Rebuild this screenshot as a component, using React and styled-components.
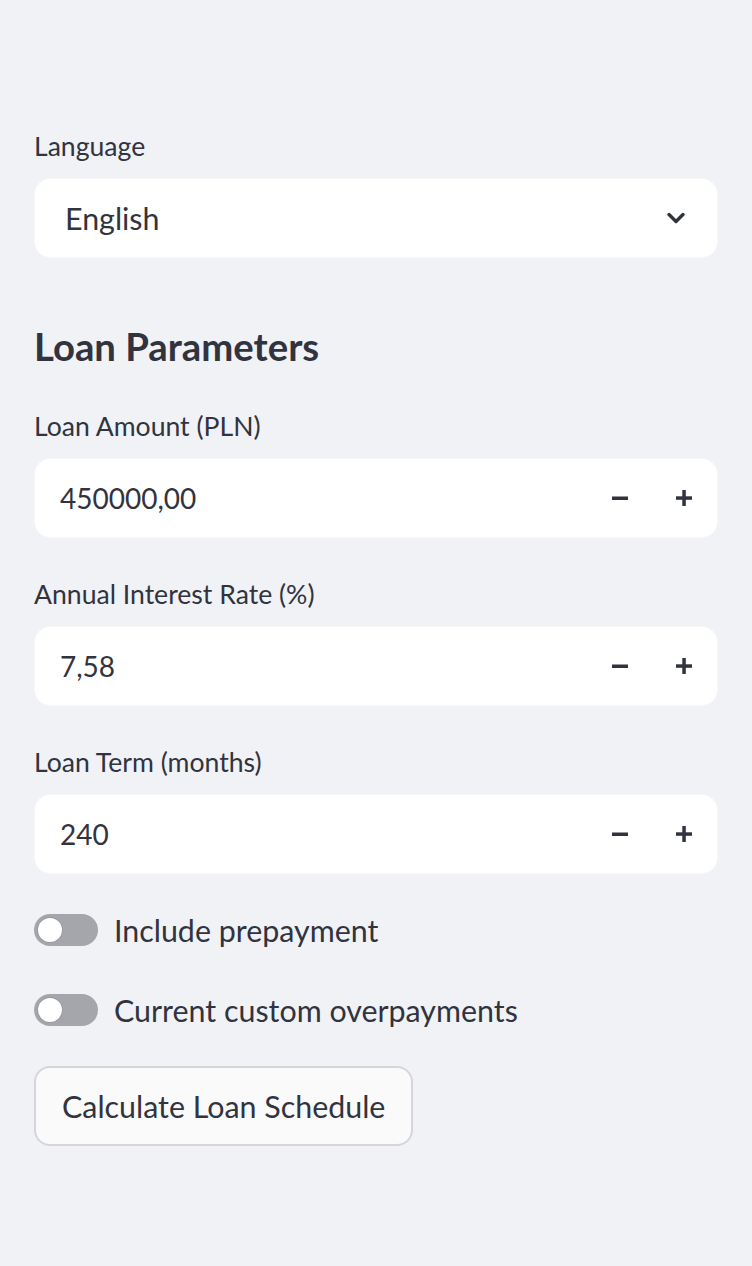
import React from "react";
import styled, { createGlobalStyle } from "styled-components";

const Global = createGlobalStyle`
  html, body {
    margin: 0;
    padding: 0;
    background: #f0f2f6;
  }
  body {
    font-family: "Source Sans Pro", Lato, "Liberation Sans", sans-serif;
    color: #31333f;
  }
`;

const Sidebar = styled.div`
  width: 752px;
  min-height: 1266px;
  box-sizing: border-box;
  padding: 122px 34px 0 34px;
  display: flex;
  flex-direction: column;
  gap: 32px;
`;

const Field = styled.div`
  display: flex;
  flex-direction: column;
  gap: 8px;
`;

const Label = styled.div`
  height: 48px;
  display: flex;
  align-items: center;
  font-size: 26.6px;
  color: #31333f;
`;

const Box = styled.div`
  height: 80px;
  box-sizing: border-box;
  background: #ffffff;
  border: 1px solid #f7f8fa;
  border-radius: 16px;
  display: flex;
  align-items: center;
  padding-left: ${(p) => p.$left}px;
  padding-right: ${(p) => p.$right}px;
  font-size: ${(p) => p.$size}px;
`;

const Value = styled.div`
  flex: 1;
`;

const Step = styled.div`
  width: 64px;
  height: 100%;
  display: flex;
  align-items: center;
  justify-content: center;
`;

const Heading = styled.h2`
  margin: 0;
  padding-top: 32px;
  font-size: 38.3px;
  line-height: 48px;
  font-weight: 700;
  color: #31333f;
`;

const ToggleRow = styled.div`
  height: 48px;
  display: flex;
  align-items: center;
  gap: 16px;
  font-size: 30.4px;
`;

const Track = styled.div`
  width: 64px;
  height: 32px;
  border-radius: 16px;
  background: #a5a6ab;
  box-sizing: border-box;
  padding: 4px;
  display: flex;
  align-items: center;
`;

const Knob = styled.div`
  width: 24px;
  height: 24px;
  border-radius: 50%;
  background: #ffffff;
  box-shadow: 0 0 0 1px #9a9ba0;
`;

const Button = styled.button`
  align-self: flex-start;
  height: 80px;
  padding: 0 26px;
  border: 2px solid #d6d6da;
  border-radius: 16px;
  background: #fafafb;
  font-family: inherit;
  font-size: 30.4px;
  color: #31333f;
`;

const Chevron = () => (
  <svg width="20" height="14" viewBox="0 0 20 14">
    <path d="M3 3.5 L10 10.5 L17 3.5" fill="none" stroke="#31333f" strokeWidth="3.4" strokeLinecap="round" strokeLinejoin="round" />
  </svg>
);

const Minus = () => (
  <svg width="18" height="18" viewBox="0 0 18 18">
    <rect x="1" y="7.5" width="16" height="3.5" fill="#31333f" />
  </svg>
);

const Plus = () => (
  <svg width="18" height="18" viewBox="0 0 18 18">
    <rect x="1" y="7.3" width="16" height="3.5" fill="#31333f" />
    <rect x="7.3" y="1" width="3.5" height="16" fill="#31333f" />
  </svg>
);

const NumberInput = ({ label, value }) => (
  <Field>
    <Label>{label}</Label>
    <Box $left={25} $right={1} $size={28}>
      <Value>{value}</Value>
      <Step><Minus /></Step>
      <Step><Plus /></Step>
    </Box>
  </Field>
);

const Toggle = ({ label }) => (
  <ToggleRow>
    <Track><Knob /></Track>
    {label}
  </ToggleRow>
);

export default function App() {
  return (
    <>
      <Global />
      <Sidebar>
        <Field>
          <Label>Language</Label>
          <Box $left={30} $right={31} $size={30.4}>
            <Value>English</Value>
            <Chevron />
          </Box>
        </Field>
        <Heading>Loan Parameters</Heading>
        <NumberInput label="Loan Amount (PLN)" value="450000,00" />
        <NumberInput label="Annual Interest Rate (%)" value="7,58" />
        <NumberInput label="Loan Term (months)" value="240" />
        <Toggle label="Include prepayment" />
        <Toggle label="Current custom overpayments" />
        <Button>Calculate Loan Schedule</Button>
      </Sidebar>
    </>
  );
}
